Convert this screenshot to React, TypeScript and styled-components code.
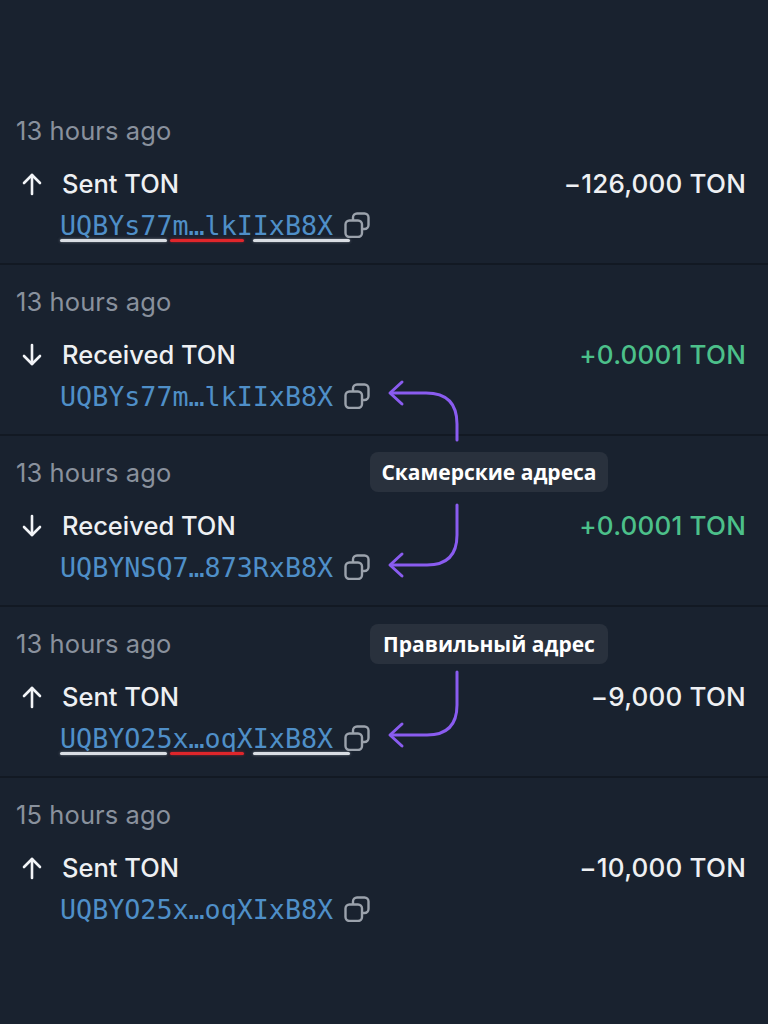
import React from 'react';
import styled, { createGlobalStyle } from 'styled-components';

const GlobalStyle = createGlobalStyle`
  html, body {
    margin: 0;
    padding: 0;
    background: #19222f;
  }
  body {
    font-family: Inter, "Noto Sans", "Liberation Sans", sans-serif;
  }
`;

const Page = styled.div`
  position: relative;
  width: 768px;
  height: 1024px;
  padding-top: 94px;
  box-sizing: border-box;
  background: #19222f;
  overflow: hidden;
`;

const Row = styled.div<{ $last?: boolean }>`
  height: 171px;
  box-sizing: border-box;
  padding: 22px 22px 0 16px;
  border-bottom: ${(p) => (p.$last ? 'none' : '2px solid #121923')};
`;

const Time = styled.div`
  height: 30px;
  line-height: 30px;
  font-size: 25.5px;
  color: #89919d;
  letter-spacing: 0.1px;
`;

const Main = styled.div`
  display: grid;
  grid-template-columns: 46px 1fr auto;
  margin-top: 23px;
`;

const IconCell = styled.div`
  display: flex;
  align-items: center;
  padding-left: 6px;
  height: 30px;
`;

const Title = styled.div`
  height: 30px;
  line-height: 30px;
  font-size: 25.5px;
  font-weight: 450;
  color: #eef0f3;
`;

const Amount = styled.div<{ $in?: boolean }>`
  height: 30px;
  line-height: 30px;
  font-size: 26px;
  font-weight: 450;
  color: ${(p) => (p.$in ? '#4cc08a' : '#eef0f3')};
  text-align: right;
  letter-spacing: 0.2px;
`;

const AddressLine = styled.div`
  grid-column: 2 / 4;
  position: relative;
  display: flex;
  align-items: center;
  gap: 11px;
  height: 34px;
  margin-top: 9px;
  margin-left: -2px;
`;

const Address = styled.span`
  font-family: "DejaVu Sans Mono", "Liberation Mono", monospace;
  font-size: 26.7px;
  color: #4f8fc8;
`;

const Mark = styled.span<{ $left: number; $width: number; $red?: boolean }>`
  position: absolute;
  top: 31px;
  left: ${(p) => p.$left}px;
  width: ${(p) => p.$width}px;
  height: 3px;
  border-radius: 2px;
  background: ${(p) => (p.$red ? '#e0262b' : '#d9dde3')};
  box-shadow: 0 0 3px ${(p) => (p.$red ? 'rgba(224,38,43,0.6)' : 'rgba(217,221,227,0.5)')};
`;

const Badge = styled.div<{ $top: number }>`
  position: absolute;
  left: 370px;
  top: ${(p) => p.$top}px;
  width: 238px;
  height: 40px;
  border-radius: 8px;
  background: #29313d;
  color: #ffffff;
  font-family: "Open Sans", "Noto Sans", sans-serif;
  font-weight: 700;
  font-size: 21px;
  display: flex;
  align-items: center;
  justify-content: center;
`;

const Overlay = styled.svg`
  position: absolute;
  left: 0;
  top: 0;
  pointer-events: none;
`;

const DirIcon = ({ up }: { up: boolean }) => (
  <svg width="20" height="24" viewBox="0 0 20 24" fill="none" stroke="#f2f4f7" strokeWidth="2.6" strokeLinecap="round" strokeLinejoin="round">
    {up ? (
      <>
        <path d="M10 3V22" />
        <path d="M2 11L10 3L18 11" />
      </>
    ) : (
      <>
        <path d="M10 2V21" />
        <path d="M2 13L10 21L18 13" />
      </>
    )}
  </svg>
);

const CopyIcon = () => (
  <svg width="26" height="26" viewBox="0 0 26 26" fill="none" stroke="#9ba2ac" strokeWidth="2.4" strokeLinejoin="round">
    <path d="M9 8V5.5A4 4 0 0 1 13 1.5H20.5A4 4 0 0 1 24.5 5.5V13A4 4 0 0 1 20.5 17H18" />
    <rect x="1.5" y="8.5" width="16.5" height="16.5" rx="4" />
  </svg>
);

type Tx = {
  time: string;
  up: boolean;
  title: string;
  amount: string;
  address: string;
  marked?: boolean;
};

const txs: Tx[] = [
  { time: '13 hours ago', up: true, title: 'Sent TON', amount: '\u2212126,000 TON', address: 'UQBYs77m\u2026lkIIxB8X', marked: true },
  { time: '13 hours ago', up: false, title: 'Received TON', amount: '+0.0001 TON', address: 'UQBYs77m\u2026lkIIxB8X' },
  { time: '13 hours ago', up: false, title: 'Received TON', amount: '+0.0001 TON', address: 'UQBYNSQ7\u2026873RxB8X' },
  { time: '13 hours ago', up: true, title: 'Sent TON', amount: '\u22129,000 TON', address: 'UQBYO25x\u2026oqXIxB8X', marked: true },
  { time: '15 hours ago', up: true, title: 'Sent TON', amount: '\u221210,000 TON', address: 'UQBYO25x\u2026oqXIxB8X' },
];

const purple = '#8a5cf0';

export default function App() {
  return (
    <Page>
      <GlobalStyle />
      {txs.map((tx, i) => (
        <Row key={i} $last={i === txs.length - 1}>
          <Time>{tx.time}</Time>
          <Main>
            <IconCell>
              <DirIcon up={tx.up} />
            </IconCell>
            <Title>{tx.title}</Title>
            <Amount $in={!tx.up}>{tx.amount}</Amount>
            <AddressLine>
              <Address>{tx.address}</Address>
              <CopyIcon />
              {tx.marked && (
                <>
                  <Mark $left={0} $width={107} />
                  <Mark $left={110} $width={74} $red />
                  <Mark $left={193} $width={97} />
                </>
              )}
            </AddressLine>
          </Main>
        </Row>
      ))}

      <Badge $top={452}>Скамерские адреса</Badge>
      <Badge $top={624}>Правильный адрес</Badge>

      <Overlay width="768" height="1024" viewBox="0 0 768 1024" fill="none" stroke={purple} strokeWidth="3" strokeLinecap="round" strokeLinejoin="round">
        <path d="M457 440V424Q457 393 426 393H391" />
        <path d="M402 382L390 393L402 404" />
        <path d="M457 505V535Q457 565 427 565H391" />
        <path d="M402 554L390 565L402 576" />
        <path d="M457 672V705Q457 735 427 735H391" />
        <path d="M402 724L390 735L402 746" />
      </Overlay>
    </Page>
  );
}
